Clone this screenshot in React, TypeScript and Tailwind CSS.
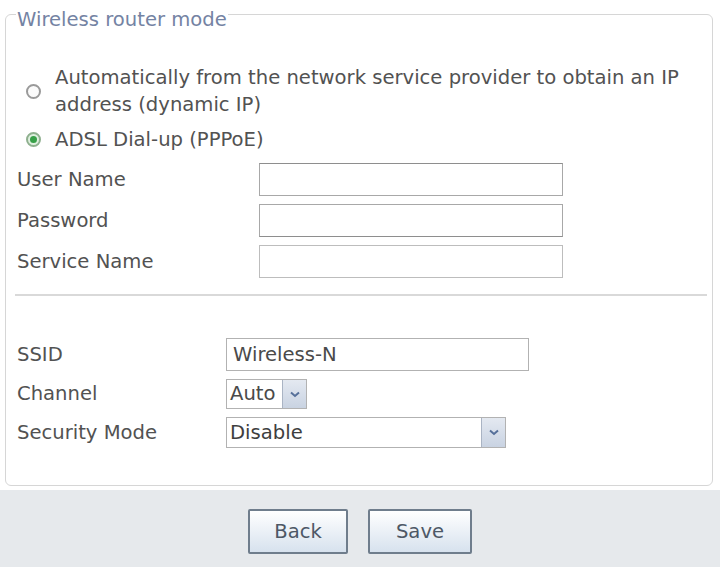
import React from "react";

const Chevron = () => (
  <svg width="10" height="7" viewBox="0 0 10 7">
    <path d="M1 1.5 L5 5 L9 1.5" fill="none" stroke="#56709a" strokeWidth="2" />
  </svg>
);

const ArrowBox = () => (
  <div className="w-[24px] h-full flex items-center justify-center bg-gradient-to-b from-[#e4e9f1] to-[#c9d3e2] border-l border-[#aab4c4]">
    <Chevron />
  </div>
);

const Radio = ({ checked }: { checked?: boolean }) => (
  <div
    className={`w-[15px] h-[15px] rounded-full border-2 flex items-center justify-center ${
      checked ? "border-[#8fb08f] bg-[#dff0df]" : "border-[#9a9a9a] bg-[#fbfbfb]"
    }`}
  >
    {checked && <div className="w-[7px] h-[7px] rounded-full bg-[#37a048]" />}
  </div>
);

const Row = ({ label, indent, children }: { label: string; indent: string; children: React.ReactNode }) => (
  <div className="flex items-center">
    <div className={`pl-[11px] ${indent}`}>{label}</div>
    {children}
  </div>
);

export default function App() {
  return (
    <div className="w-[720px] h-[567px] bg-white text-[#525252] font-['DejaVu_Sans',sans-serif] text-[19.6px] overflow-hidden">
      <div className="pt-[2px] pl-[5px] pr-[7px]">
        <fieldset className="border border-[#d6d6d6] rounded-[6px] h-[484px] pb-0">
          <legend className="ml-[10px] pt-[12px] leading-[12px] px-[1px] text-[#7483a3]">Wireless router mode</legend>

          <div className="mt-[38px] flex items-center">
            <div className="w-[49px] flex justify-center pl-[5px]">
              <Radio />
            </div>
            <div className="leading-[27px]">
              Automatically from the network service provider to obtain an IP
              <br />
              address (dynamic IP)
            </div>
          </div>
          <div className="mt-[8px] flex items-center leading-[27px]">
            <div className="w-[49px] flex justify-center pl-[5px]">
              <Radio checked />
            </div>
            <div>ADSL Dial-up (PPPoE)</div>
          </div>

          <div className="mt-[10px] flex flex-col gap-[8px]">
            <Row label="User Name" indent="w-[253px]">
              <div className="w-[304px] h-[33px] border border-[#a8a8a8] border-t-[#8e8e8e] bg-white" />
            </Row>
            <Row label="Password" indent="w-[253px]">
              <div className="w-[304px] h-[33px] border border-[#a8a8a8] border-b-[#8e8e8e] bg-white" />
            </Row>
            <Row label="Service Name" indent="w-[253px]">
              <div className="w-[304px] h-[33px] border border-[#bdbdbd] bg-white" />
            </Row>
          </div>

          <div className="mt-[16px] ml-[9px] mr-[5px] h-[2px] bg-[#d9d9d9]" />

          <div className="mt-[42px] flex flex-col gap-[8px]">
            <Row label="SSID" indent="w-[220px]">
              <div className="w-[303px] h-[33px] border border-[#b2b2b2] bg-white flex items-center pl-[6px] text-[#4a4a4a]">
                Wireless-N
              </div>
            </Row>
            <Row label="Channel" indent="w-[220px]">
              <div className="w-[81px] h-[30px] border border-[#b2b2b2] bg-white flex items-center">
                <div className="flex-1 pl-[3px] text-[#4a4a4a]">Auto</div>
                <ArrowBox />
              </div>
            </Row>
            <Row label="Security Mode" indent="w-[220px]">
              <div className="w-[280px] h-[31px] border border-[#b2b2b2] bg-white flex items-center">
                <div className="flex-1 pl-[3px] text-[#3e3e3e]">Disable</div>
                <ArrowBox />
              </div>
            </Row>
          </div>
        </fieldset>
      </div>

      <div className="mt-[4px] h-[80px] bg-[#e6e9ec] flex justify-center gap-[20px] pt-[19px]">
        <button className="w-[100px] h-[45px] border-2 border-[#6f7d8c] rounded-[2px] bg-gradient-to-b from-white to-[#d7e2ee] text-[#4d5866] text-[19.6px]">
          Back
        </button>
        <button className="w-[104px] h-[45px] border-2 border-[#6f7d8c] rounded-[2px] bg-gradient-to-b from-white to-[#d7e2ee] text-[#4d5866] text-[19.6px]">
          Save
        </button>
      </div>
    </div>
  );
}
